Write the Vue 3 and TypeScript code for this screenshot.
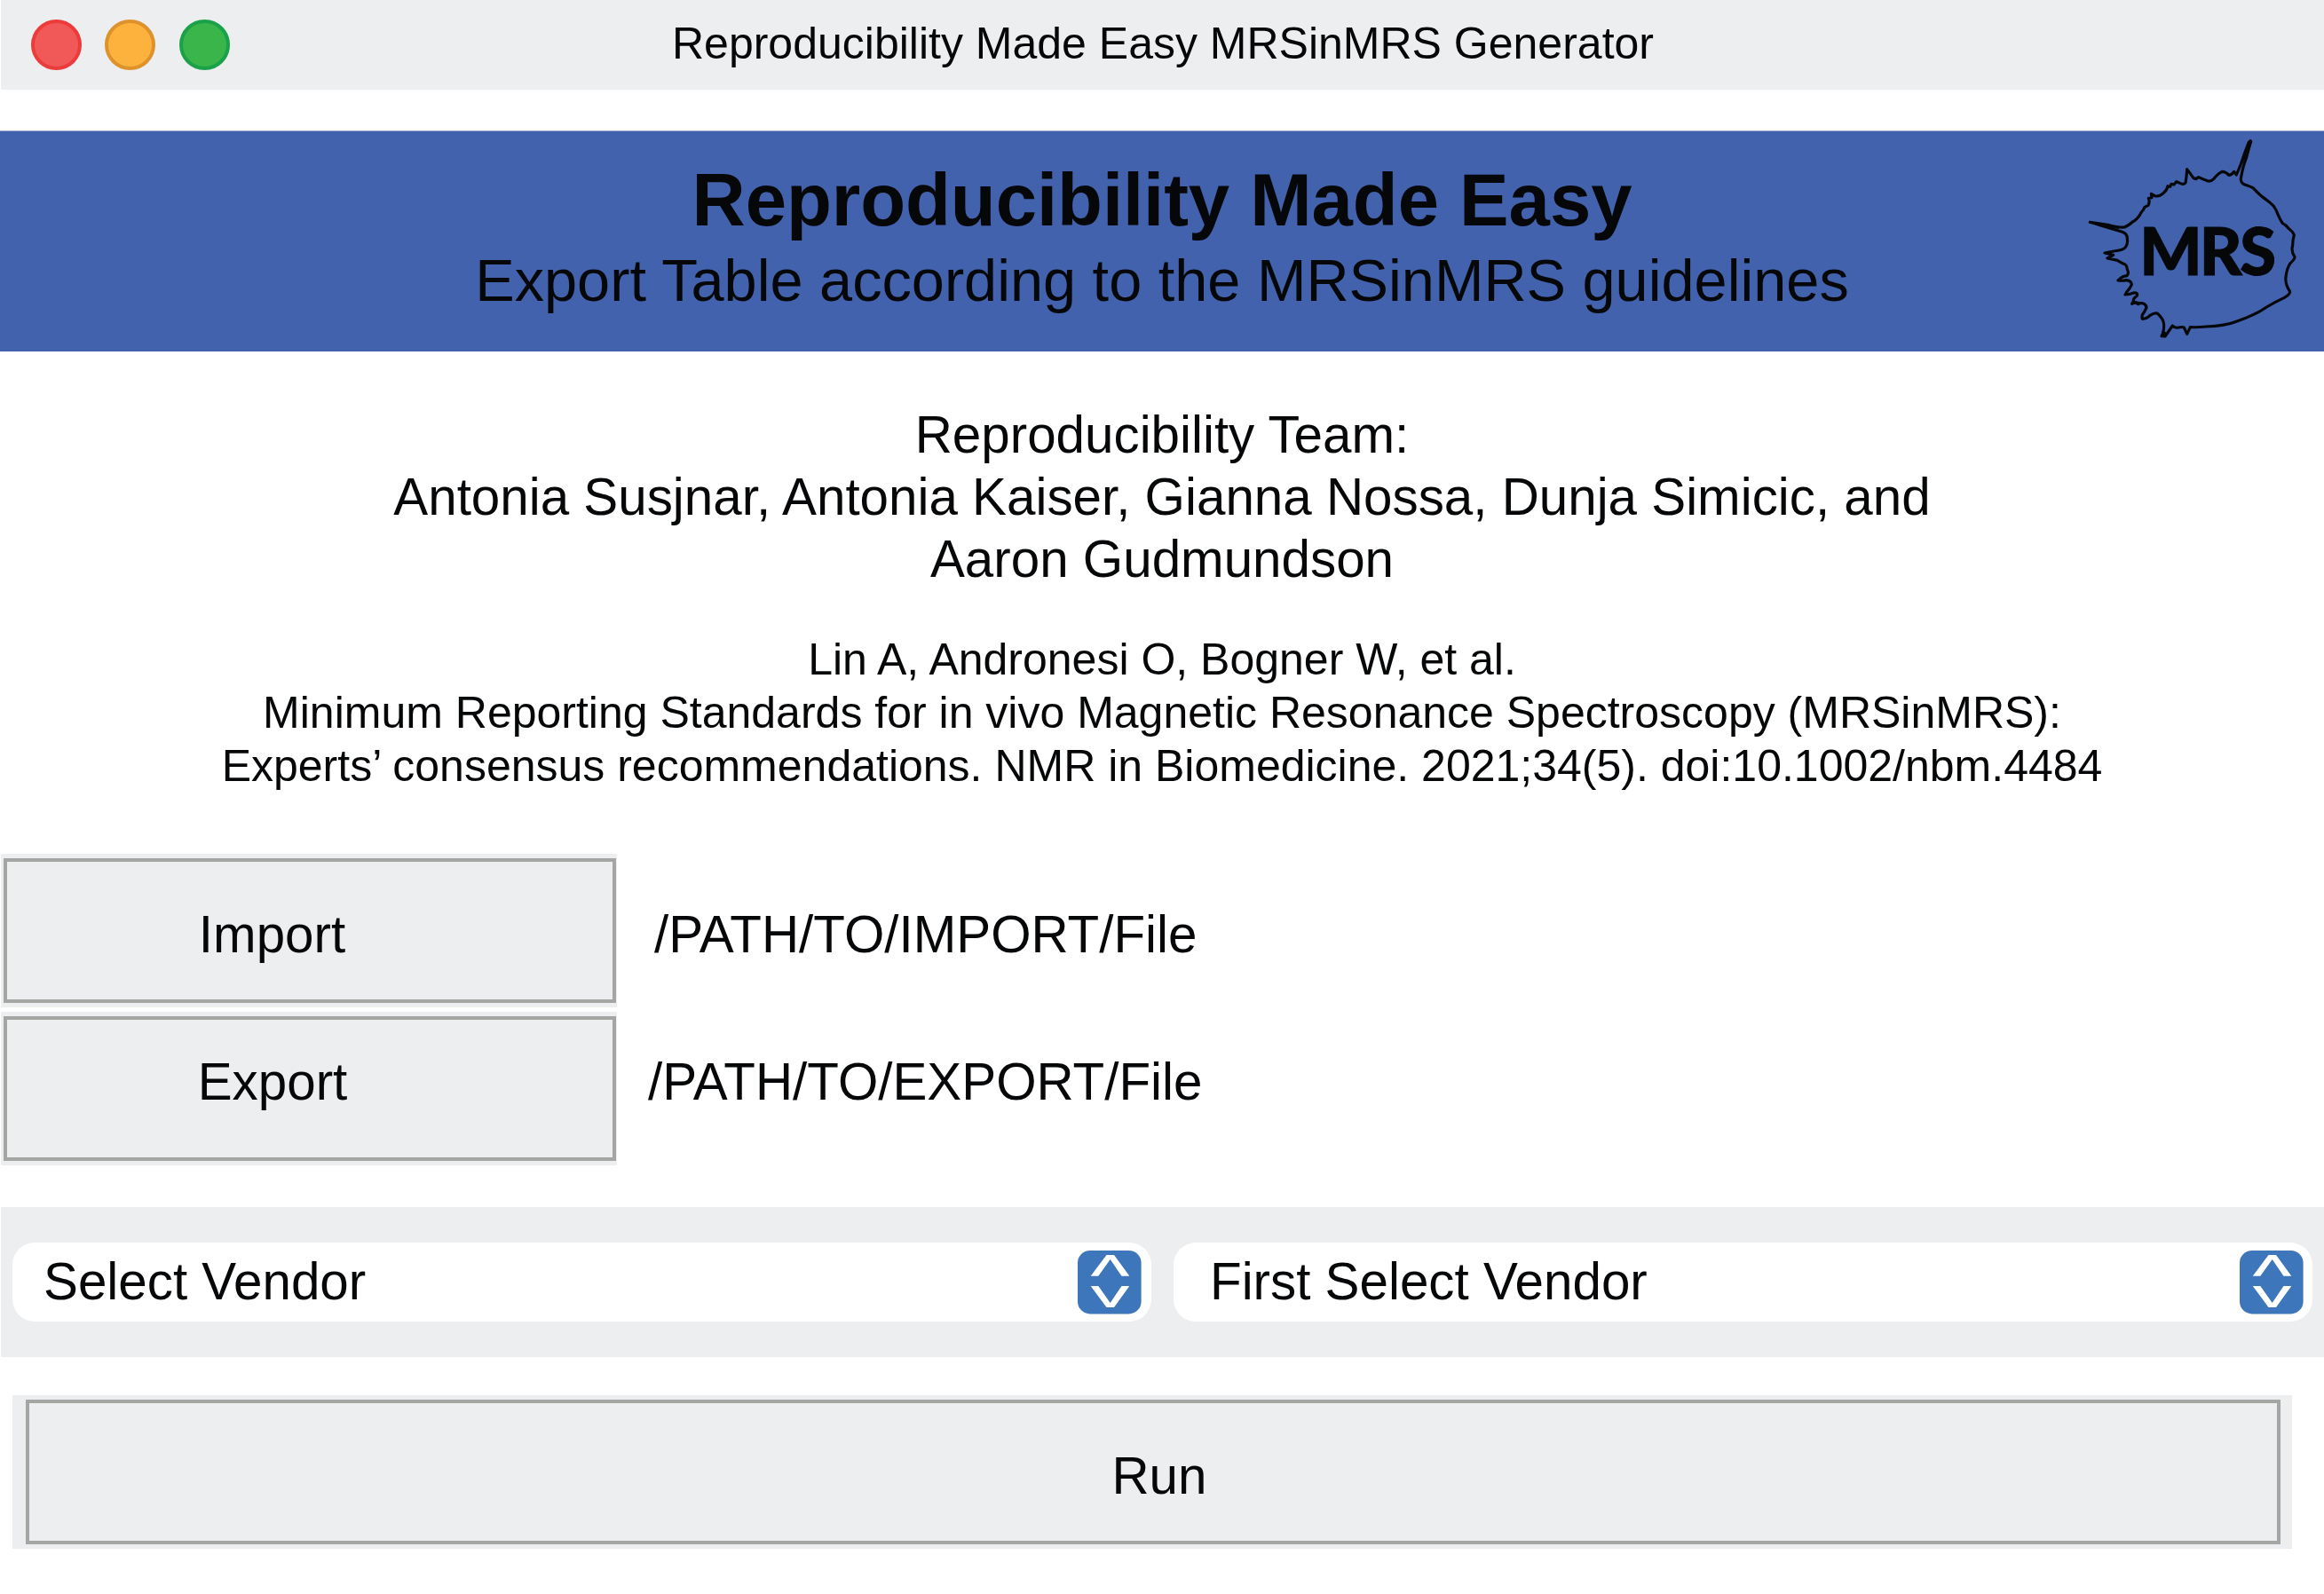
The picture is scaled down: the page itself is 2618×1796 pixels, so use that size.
<script setup lang="ts">
import { ref } from 'vue'

interface PathRow {
  label: string
  path: string
}

const lights = ['red', 'amber', 'green']
const rows = ref<PathRow[]>([
  { label: 'Import', path: '/PATH/TO/IMPORT/File' },
  { label: 'Export', path: '/PATH/TO/EXPORT/File' },
])
const selects = ref<string[]>(['Select Vendor', 'First Select Vendor'])
</script>

<template>
  <div class="window">
    <header class="titlebar">
      <div class="lights">
        <span v-for="l in lights" :key="l" class="light" :class="l"></span>
      </div>
      <span class="window-title">Reproducibility Made Easy MRSinMRS Generator</span>
    </header>

    <section class="banner">
      <h1>Reproducibility Made Easy</h1>
      <p>Export Table according to the MRSinMRS guidelines</p>
      <svg class="logo" viewBox="0 0 834 780">
        <path
          class="outline"
          d="M586 56 L580 60 Q564 100 553 135 L538 171 L530 160 Q524 170 512 172 Q502 160 490 160 Q476 166 462 184 Q452 194 442 192 Q424 186 410 179 L401 185 Q392 184 386 172 L371 152 Q370 176 366 198 Q358 206 345 198 L335 194 L327 204 L318 202 L314 211 L306 209 Q304 222 290 234 Q276 246 262 242 L250 235 L252 248 L241 250 Q246 262 240 274 L228 280 Q224 290 217 297 Q204 322 187 330 Q174 342 160 348 Q140 350 108 341 L43 331 Q100 348 152 364 Q170 370 169 388 Q172 402 163 416 Q156 426 124 429 L93 435 L122 442 L102 453 L136 460 Q146 466 155 471 Q168 474 169 490 Q176 504 168 512 Q154 514 148 519 L138 528 Q150 530 166 527 Q184 530 184 542 Q178 556 168 566 L162 576 Q176 576 190 570 Q206 568 202 580 Q188 590 190 598 L185 607 L196 602 L206 608 L214 604 Q232 604 234 620 Q228 634 220 644 Q218 652 220 658 Q236 658 246 646 Q262 636 272 640 Q286 654 290 664 Q296 680 290 706 L285 716 L297 717 L322 681 Q330 690 342 687 Q354 684 361 687 L371 709 L382 686 Q410 687 436 684 Q500 682 540 666 Q600 646 640 618 Q666 602 700 586 Q722 574 718 564 Q702 540 705 516 Q708 488 720 470 Q736 456 735 448 Q722 430 728 410 Q728 390 733 374 Q728 362 714 352 Q708 342 694 335 Q684 320 672 290 Q664 274 648 262 Q616 240 594 215 Q580 208 566 204 Q552 198 553 184 Q560 140 572 112 Z"
        />
        <path class="spike" d="M584 52 L592 58 L570 130 L562 122 L545 160 L540 158 Z M43 328 L145 346 L140 354 L43 333 Z M190 596 L210 600 L214 608 L184 609 Z M286 700 L300 702 L299 718 L283 717 Z" />
        <text x="211 413 550" y="510">MRS</text>
      </svg>
    </section>

    <section class="team">
      <p>Reproducibility Team:</p>
      <p>Antonia Susjnar, Antonia Kaiser, Gianna Nossa, Dunja Simicic, and</p>
      <p>Aaron Gudmundson</p>
    </section>

    <section class="citation">
      <p>Lin A, Andronesi O, Bogner W, et al.</p>
      <p>Minimum Reporting Standards for in vivo Magnetic Resonance Spectroscopy (MRSinMRS):</p>
      <p>Experts’ consensus recommendations. NMR in Biomedicine. 2021;34(5). doi:10.1002/nbm.4484</p>
    </section>

    <section class="files">
      <div v-for="r in rows" :key="r.label" class="file-row" :class="r.label.toLowerCase()">
        <div class="shell">
          <button type="button">{{ r.label }}</button>
        </div>
        <span class="path">{{ r.path }}</span>
      </div>
    </section>

    <section class="vendors">
      <div v-for="s in selects" :key="s" class="select">
        <span>{{ s }}</span>
        <svg class="stepper" viewBox="0 0 72 72">
          <rect width="71.6" height="71.4" rx="14" />
          <path d="M14.7 28.7 L32.5 5 H41 L58.3 28.7 H49.5 L36.7 10 L23.3 28.7 Z" />
          <path d="M14.7 40 L32.5 64 H41 L58.3 40 H49.5 L36.7 59 L23.3 40 Z" />
        </svg>
      </div>
    </section>

    <div class="run-shell">
      <button type="button">Run</button>
    </div>
  </div>
</template>

<style>
body {
  margin: 0;
  background: #fff;
}
</style>

<style scoped>
.window {
  display: flex;
  flex-direction: column;
  width: 2618px;
  height: 1796px;
  overflow: hidden;
  background: #fff;
  color: #050708;
  font-family: 'Liberation Sans', Arial, sans-serif;
  font-size: 58.333px;
  line-height: 70px;
  white-space: nowrap;
}
h1,
p {
  margin: 0;
}
.titlebar {
  position: relative;
  display: flex;
  align-items: center;
  justify-content: center;
  height: 101px;
  margin-left: 1px;
  background: #edeef0;
  font-size: 50px;
  line-height: 60px;
}
.window-title {
  margin: -4px 0 0 1px;
}
.lights {
  position: absolute;
  left: 34px;
  top: 22px;
  display: flex;
  gap: 26.4px;
}
.light {
  box-sizing: border-box;
  width: 57px;
  height: 57px;
  border: 4px solid;
  border-radius: 50%;
}
.red {
  background: #f15858;
  border-color: #eb3b3b;
}
.amber {
  background: #fdb23e;
  border-color: #de922c;
}
.green {
  background: #39b54a;
  border-color: #1aa14a;
}
.banner {
  position: relative;
  box-sizing: border-box;
  height: 249px;
  margin-top: 46px;
  padding-top: 28px;
  border-top: 1px solid #98a6d0;
  background: #4262ad;
  text-align: center;
}
.banner h1 {
  margin-bottom: 1px;
  font-size: 83.333px;
  line-height: 99px;
  font-weight: 700;
  letter-spacing: -0.06px;
}
.banner p {
  font-size: 66.667px;
  line-height: 80px;
}
.logo {
  position: absolute;
  left: 2340px;
  top: -8px;
  width: 278px;
  height: 260px;
}
.outline {
  fill: none;
  stroke: #050708;
  stroke-width: 9.5;
  stroke-linejoin: round;
}
.spike {
  fill: #050708;
}
.logo text {
  fill: #050708;
  stroke: #050708;
  stroke-width: 3;
  font-family: Lato, sans-serif;
  font-weight: 900;
  font-size: 222px;
}
.team {
  margin-top: 59px;
  text-align: center;
}
.citation {
  margin-top: 48px;
  text-align: center;
  font-size: 50px;
  line-height: 60px;
}
.files {
  display: flex;
  flex-direction: column;
  gap: 5px;
  margin-top: 69px;
}
.file-row {
  display: flex;
}
button {
  box-sizing: border-box;
  display: block;
  margin: 0;
  padding: 0;
  border: 4px solid #a5a5a3;
  border-radius: 0;
  background: #edeef0;
  color: inherit;
  font: inherit;
}
.shell {
  box-sizing: border-box;
  width: 694px;
  height: 173px;
  margin-left: 1px;
  padding: 5px 2px 5px 3px;
  background: #edeef0;
}
.shell button {
  width: 690px;
  height: 163px;
}
.import button {
  padding: 8px 85px 0 0;
}
.export button {
  padding: 0 84px 16px 0;
}
.path {
  margin: 56px 0 0 42px;
}
.export .path {
  margin: 44px 0 0 35px;
}
.vendors {
  box-sizing: border-box;
  display: flex;
  gap: 25px;
  height: 169px;
  margin: 47px 0 0 1px;
  padding: 40px 0 40px 13px;
  background: #edeef0;
}
.select {
  box-sizing: border-box;
  flex: none;
  display: flex;
  align-items: center;
  justify-content: space-between;
  width: 1283px;
  height: 89px;
  padding: 0 11px 0 35px;
  border-radius: 25px;
  background: #fff;
}
.select:last-child {
  padding: 0 10px 0 41px;
}
.select span {
  margin-top: -2px;
}
.stepper {
  align-self: flex-start;
  width: 72px;
  height: 72px;
  margin-top: 9px;
}
.stepper rect {
  fill: #3e76bc;
}
.stepper path {
  fill: #fff;
}
.run-shell {
  box-sizing: border-box;
  width: 2568px;
  height: 173px;
  margin: 43px 0 0 14px;
  padding: 5px 13px 5px 15px;
  background: #edeef0;
}
.run-shell button {
  width: 100%;
  height: 163px;
  padding: 8px 0 0 14px;
}
</style>
